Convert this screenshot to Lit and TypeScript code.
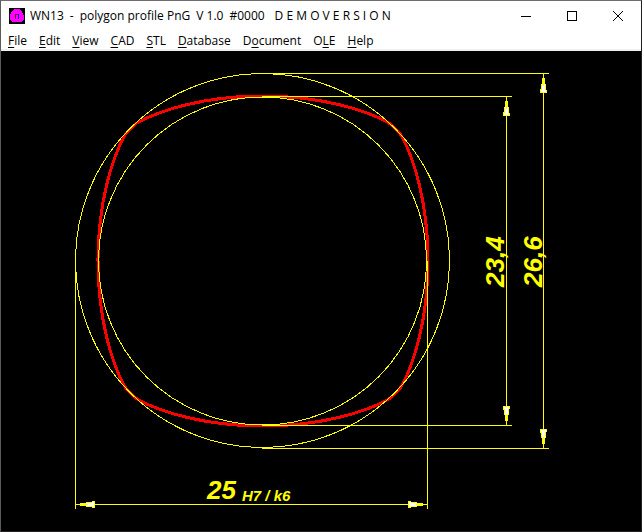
import { LitElement, html, svg, css } from "lit";
import { customElement } from "lit/decorators.js";

const MENU: [string, string, string][] = [
  ["", "F", "ile"],
  ["", "E", "dit"],
  ["", "V", "iew"],
  ["", "C", "AD"],
  ["", "S", "TL"],
  ["", "D", "atabase"],
  ["D", "o", "cument"],
  ["O", "L", "E"],
  ["", "H", "elp"],
];

const TITLE = ["WN13", "-", "polygon profile PnG", "V 1.0", "#0000"];

@customElement("profile-drawing")
export class ProfileDrawing extends LitElement {
  static styles = css`
    :host { display: flex; flex: 1; min-height: 0; background: #000; }
    svg { display: block; width: 100%; height: 100%; }
    .thin { fill: none; stroke: #ff0; stroke-width: 1; shape-rendering: crispEdges; }
    .profile { fill: none; stroke: #f00; stroke-width: 3; shape-rendering: crispEdges; }
    .arrow { fill: #fff; stroke: #ff0; stroke-width: 1; shape-rendering: crispEdges; }
    text { fill: #ff0; font: italic bold 26px "Liberation Sans Narrow", "Liberation Sans", sans-serif; }
    .fit { font-size: 15px; }
  `;

  private arrow(x: number, y: number, angle: number) {
    return svg`<path class="arrow" transform="translate(${x} ${y}) rotate(${angle})"
      d="M0 2 L-3 19 H3 Z M0 0 V12" />`;
  }

  render() {
    return html`
      <svg viewBox="1 51 640 480" preserveAspectRatio="xMinYMin meet" role="img" aria-label="Polygon profile">
        <path class="profile" d="M263 96 C321 96 366 110 389 123 C392 125 399 132 401 135 C414 158 428 203 428 261
          C428 319 414 364 401 387 C399 390 392 397 389 399 C366 412 321 426 263 426
          C205 426 160 412 137 399 C134 397 127 390 125 387 C112 364 98 319 98 261
          C98 203 112 158 125 135 C127 132 134 125 137 123 C160 110 205 96 263 96 Z" />
        <circle class="thin" cx="262.5" cy="260.5" r="187" />
        <circle class="thin" cx="262.5" cy="261" r="164" />
        <path class="thin" d="M262 73.5 H549 M262 96.5 H512 M262 425.5 H512 M262 448.5 H549
          M506.5 96 V425 M543.5 73 V448 M75.5 261 V509 M427.5 261 V509 M75 504.5 H427" />
        ${this.arrow(506.5, 96.5, 0)} ${this.arrow(543.5, 73.5, 0)}
        ${this.arrow(506.5, 425.5, 180)} ${this.arrow(543.5, 448.5, 180)}
        ${this.arrow(75.5, 504.5, -90)} ${this.arrow(427.5, 504.5, 90)}
        <text transform="translate(504 287) rotate(-90)">23,4</text>
        <text transform="translate(542 287) rotate(-90)">26,6</text>
        <text x="207" y="499">25</text>
        <text class="fit" x="242" y="501">H7 / k6</text>
      </svg>
    `;
  }
}

@customElement("app-root")
export class AppRoot extends LitElement {
  static styles = css`
    :host {
      display: flex; flex-direction: column; box-sizing: border-box; height: 100vh;
      border: 1px solid #242021; border-top-color: #6e6c6d; border-left-color: #5d5a5c;
      background: #fff; color: #000; font: 12px/16px "Open Sans", sans-serif;
    }
    header { display: flex; align-items: center; height: 29px; flex: none; }
    .logo { width: 16px; height: 16px; margin: 0 5px 0 8px; flex: none; }
    h1 { display: flex; gap: 6px; margin: 0; flex: 1; font: inherit; white-space: nowrap; }
    .demo { margin-left: 4px; }
    button { border: 0; padding: 0; background: none; color: inherit; font: inherit; }
    .caption { width: 46px; height: 29px; display: grid; place-items: center; }
    .caption svg { width: 10px; height: 10px; fill: none; stroke: #000; }
    .crisp { shape-rendering: crispEdges; }
    nav { display: flex; gap: 12px; padding: 3px 7px 0; height: 16px; flex: none; border-bottom: 2px solid #f0f0f0; }
    u { text-underline-offset: 2px; text-decoration-thickness: 1px; text-decoration-skip-ink: none; }
  `;

  render() {
    return html`
      <header>
        <svg class="logo" viewBox="0 0 16 16">
          <rect width="16" height="16" fill="#000" />
          <path class="crisp" d="M5 1H10L13 4L15 8V11L13 14H3L1 12V8L2 4Z" fill="#f0f" />
          <path class="crisp" d="M6.5 11V6M6 6.5H9" fill="none" stroke="#800040" />
          <path class="crisp" d="M9.5 6V11" fill="none" stroke="#00f" />
        </svg>
        <h1>${TITLE.map((part) => html`<span>${part}</span>`)}<span class="demo">D E M O V E R S I O N</span></h1>
        <button class="caption" aria-label="Minimize"><svg class="crisp" viewBox="0 0 10 10"><path d="M0 5.5H10" /></svg></button>
        <button class="caption" aria-label="Maximize"><svg class="crisp" viewBox="0 0 10 10"><path d="M.5 .5H9.5V9.5H.5Z" /></svg></button>
        <button class="caption" aria-label="Close"><svg viewBox="0 0 10 10"><path d="M0 0L10 10M10 0L0 10" /></svg></button>
      </header>
      <nav aria-label="Main menu">
        ${MENU.map(([before, key, after]) => html`<button>${before}<u>${key}</u>${after}</button>`)}
      </nav>
      <profile-drawing></profile-drawing>
    `;
  }
}
